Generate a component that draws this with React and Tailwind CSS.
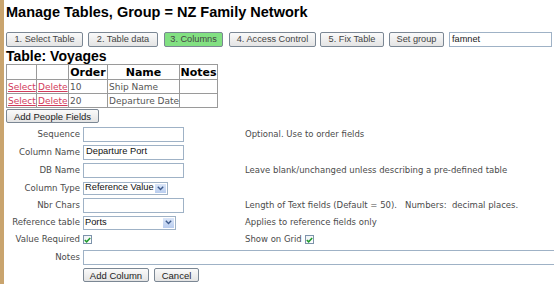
import React from "react";

const navBtn =
  "h-[15px] shrink-0 rounded-[2px] border border-[#7b8794] bg-gradient-to-b from-[#fafafa] to-[#e4e4e4] text-[9.2px] leading-[13px] text-[#444] font-['Liberation_Sans',Arial,sans-serif] flex items-center justify-center whitespace-nowrap";

const inputBox = "h-[15px] border border-[#9fb2c6] bg-white";

function Chevron() {
  return (
    <svg width="7" height="5" viewBox="0 0 7 5">
      <path d="M0.8 0.8 L3.5 3.6 L6.2 0.8" fill="none" stroke="#3d5a8c" strokeWidth="1.4" />
    </svg>
  );
}

function FakeSelect({ w, h, text, arrowX }) {
  return (
    <div
      className={`${w} ${h} border border-[#9fb2c6] bg-white flex items-stretch font-['Liberation_Sans',Arial,sans-serif] text-[9.3px] text-[#111]`}
    >
      <div className="flex-1 pl-[1px] flex items-center whitespace-nowrap overflow-hidden leading-none">{text}</div>
      <div className="w-[11px] m-[1px] bg-gradient-to-b from-[#dbe6f8] to-[#b9cdef] flex items-center justify-center">
        <Chevron />
      </div>
    </div>
  );
}

function Check() {
  return (
    <div className="w-[9px] h-[9px] border border-[#7d93ab] bg-gradient-to-br from-[#eef2f5] to-[#ffffff] flex items-center justify-center">
      <svg width="7" height="6" viewBox="0 0 7 6">
        <path d="M0.8 3 L2.6 4.8 L6.2 0.9" fill="none" stroke="#1f9a2a" strokeWidth="1.5" />
      </svg>
    </div>
  );
}

export default function App() {
  const label =
    "flex items-center justify-end whitespace-nowrap text-[8.6px] text-[#4b4b4b] font-['DejaVu_Sans',Verdana,sans-serif]";
  const desc =
    "flex items-center whitespace-pre text-[8.5px] text-[#4b4b4b] font-['DejaVu_Sans',Verdana,sans-serif]";
  const cell = "flex items-center";
  const th =
    "border border-[#9a9a9a] p-0 font-['DejaVu_Sans',Verdana,sans-serif] font-bold text-[11px] leading-[13px] text-black";
  const td =
    "border border-[#9a9a9a] p-0 pl-[1px] h-[14px] text-[9px] leading-[12px] text-[#555] font-['DejaVu_Sans',Verdana,sans-serif] whitespace-nowrap overflow-hidden";
  const link = "text-[#d23c5c] underline";

  return (
    <div className="w-[554px] h-[284px] overflow-hidden bg-white flex">
      <div className="w-[4px] shrink-0 bg-[#c9a46e]" />
      <div className="pl-[2px] flex flex-col min-w-0">
        <h1 className="mt-[4px] h-[16px] leading-[16px] text-[14.5px] font-bold text-black whitespace-nowrap font-['Liberation_Sans',Arial,sans-serif]">
          Manage Tables, Group = NZ Family Network
        </h1>

        <div className="mt-[12px] flex h-[15px] items-center">
          <div className={`${navBtn} w-[77px]`}>1. Select Table</div>
          <div className={`${navBtn} w-[70px] ml-[5px]`}>2. Table data</div>
          <div className={`${navBtn} w-[59px] ml-[6px] !bg-none bg-[#82e082]`}>3. Columns</div>
          <div className={`${navBtn} w-[87px] ml-[6px]`}>4. Access Control</div>
          <div className={`${navBtn} w-[64px] ml-[4px]`}>5. Fix Table</div>
          <div className={`${navBtn} w-[55px] ml-[5px]`}>Set group</div>
          <div className={`${inputBox} w-[103px] ml-[5px] flex items-center pl-[2px] text-[9.2px] text-[#222] font-['Liberation_Sans',Arial,sans-serif]`}>
            famnet
          </div>
        </div>

        <h2 className="mt-[2px] h-[14px] leading-[14px] text-[14px] font-bold text-black whitespace-nowrap font-['Liberation_Sans',Arial,sans-serif]">
          Table: Voyages
        </h2>

        <table className="mt-[1px] border-collapse table-fixed w-[212px] border border-[#7c7c7c]">
          <thead>
            <tr>
              <th className={`${th} w-[30px] h-[15px]`}></th>
              <th className={`${th} w-[32px]`}></th>
              <th className={`${th} w-[39px]`}>Order</th>
              <th className={`${th} w-[72px]`}>Name</th>
              <th className={`${th} w-[38px]`}>Notes</th>
            </tr>
          </thead>
          <tbody>
            <tr>
              <td className={td}><span className={link}>Select</span></td>
              <td className={td}><span className={link}>Delete</span></td>
              <td className={td}>10</td>
              <td className={td}>Ship Name</td>
              <td className={td}></td>
            </tr>
            <tr>
              <td className={td}><span className={link}>Select</span></td>
              <td className={td}><span className={link}>Delete</span></td>
              <td className={td}>20</td>
              <td className={td}>Departure Date</td>
              <td className={td}></td>
            </tr>
          </tbody>
        </table>

        <div className={`${navBtn} mt-[1px] w-[93px] !h-[14px] text-[9.5px] !text-[#222]`}>Add People Fields</div>

        <div className="mt-[2px] grid grid-cols-[74px_159px_400px] gap-x-[3px] grid-rows-[18px_18px_18px_18px_17px_17px_17px_18px_18px]">
          <div className={label}>Sequence</div>
          <div className={cell}><div className={`${inputBox} w-[101px]`} /></div>
          <div className={desc}>Optional. Use to order fields</div>

          <div className={label}>Column Name</div>
          <div className={cell}>
            <div className={`${inputBox} w-[101px] flex items-center pl-[2px] text-[9.3px] text-[#111] font-['Liberation_Sans',Arial,sans-serif] whitespace-nowrap`}>
              Departure Port
            </div>
          </div>
          <div className={desc}></div>

          <div className={label}>DB Name</div>
          <div className={cell}><div className={`${inputBox} w-[101px]`} /></div>
          <div className={desc}>Leave blank/unchanged unless describing a pre-defined table</div>

          <div className={label}>Column Type</div>
          <div className={cell}><FakeSelect w="w-[85px]" h="h-[13px]" text="Reference Value" /></div>
          <div className={desc}></div>

          <div className={label}>Nbr Chars</div>
          <div className={cell}><div className={`${inputBox} w-[101px]`} /></div>
          <div className={desc}>{"Length of Text fields (Default = 50).   Numbers:  decimal places."}</div>

          <div className={label}>Reference table</div>
          <div className={cell}><FakeSelect w="w-[93px]" h="h-[14px]" text="Ports" /></div>
          <div className={desc}>Applies to reference fields only</div>

          <div className={label}>Value Required</div>
          <div className={cell}><Check /></div>
          <div className={`${desc} gap-[3px]`}>
            <span>Show on Grid</span>
            <Check />
          </div>

          <div className={label}>Notes</div>
          <div className={`${cell} col-span-2`}><div className={`${inputBox} w-[480px]`} /></div>

          <div></div>
          <div className={`${cell} gap-[5px]`}>
            <div className={`${navBtn} w-[66px] !h-[14px] text-[9.5px] !text-[#222]`}>Add Column</div>
            <div className={`${navBtn} w-[45px] !h-[14px] text-[9.5px] !text-[#222]`}>Cancel</div>
          </div>
          <div></div>
        </div>
      </div>
    </div>
  );
}
